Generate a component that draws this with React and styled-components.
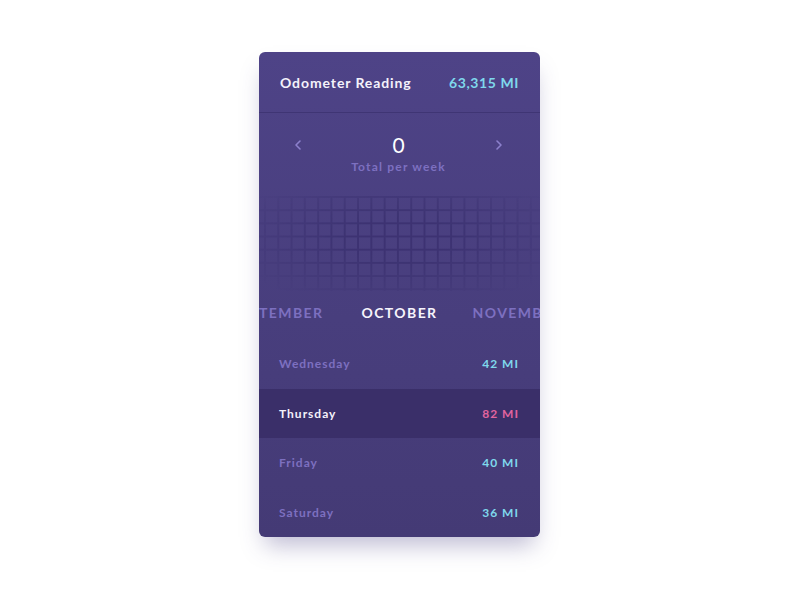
import React from "react";
import styled, { createGlobalStyle } from "styled-components";

const days = [
  { day: "Wednesday", miles: "42 MI" },
  { day: "Thursday", miles: "82 MI", active: true },
  { day: "Friday", miles: "40 MI" },
  { day: "Saturday", miles: "36 MI" },
];

const Global = createGlobalStyle`
  html, body {
    margin: 0;
    background: #ffffff;
  }
  body {
    font-family: "Lato", "Open Sans", sans-serif;
  }
`;

const Chevron = ({ flip }) => (
  <svg width="8" height="12" viewBox="0 0 8 12" fill="none">
    <path
      d={flip ? "M2 2l4 4-4 4" : "M6 2L2 6l4 4"}
      stroke="#8c80cc"
      strokeWidth="1.6"
      strokeLinecap="round"
      strokeLinejoin="round"
    />
  </svg>
);

export default function App() {
  return (
    <>
      <Global />
      <Page>
        <Card>
          <Header>
            <Title>Odometer Reading</Title>
            <Value>63,315 MI</Value>
          </Header>
          <Summary>
            <NavButton>
              <Chevron />
            </NavButton>
            <Total>
              <Count>0</Count>
              <Caption>Total per week</Caption>
            </Total>
            <NavButton>
              <Chevron flip />
            </NavButton>
          </Summary>
          <Heatmap />
          <Months>
            <Month side="left">TEMBER</Month>
            <Month current>OCTOBER</Month>
            <Month side="right">NOVEMB</Month>
          </Months>
          <List>
            {days.map((d) => (
              <Row key={d.day} active={d.active}>
                <Day active={d.active}>{d.day}</Day>
                <Miles active={d.active}>{d.miles}</Miles>
              </Row>
            ))}
          </List>
        </Card>
      </Page>
    </>
  );
}

const Page = styled.div`
  width: 800px;
  height: 600px;
  display: flex;
  justify-content: center;
  padding-top: 52px;
  box-sizing: border-box;
`;

const Card = styled.div`
  width: 281px;
  height: 485px;
  margin-left: -1px;
  border-radius: 6px;
  overflow: hidden;
  background: linear-gradient(180deg, #4e4387 0%, #483e7d 55%, #443a75 100%);
  box-shadow: 0 14px 22px -6px rgba(70, 60, 130, 0.35);
  display: flex;
  flex-direction: column;
`;

const Header = styled.div`
  height: 61px;
  display: flex;
  align-items: center;
  justify-content: space-between;
  padding: 0 21px;
  border-bottom: 1px solid #3f3574;
`;

const Title = styled.span`
  color: #f4f2fb;
  font-size: 14px;
  font-weight: 700;
  letter-spacing: 0.9px;
`;

const Value = styled.span`
  color: #7fd8ec;
  font-size: 14px;
  font-weight: 700;
  letter-spacing: 0.6px;
`;

const Summary = styled.div`
  display: flex;
  align-items: flex-start;
  justify-content: space-between;
  padding: 21px 37px 0 35px;
  height: 59px;
`;

const NavButton = styled.div`
  padding-top: 5px;
  display: flex;
`;

const Total = styled.div`
  display: flex;
  flex-direction: column;
  align-items: center;
  gap: 3px;
`;

const Count = styled.span`
  color: #ffffff;
  font-size: 21px;
  font-weight: 400;
  line-height: 22px;
`;

const Caption = styled.span`
  color: #7d70c0;
  font-size: 12px;
  font-weight: 700;
  letter-spacing: 1.2px;
`;

const Heatmap = styled.div`
  height: 96px;
  margin: 3px 0 0;
  background-image: linear-gradient(90deg, #3b3170 1.5px, transparent 1.5px),
    linear-gradient(180deg, #3b3170 1.5px, transparent 1.5px);
  background-size: 13.3px 13.2px;
  background-position: 5px 0;
  -webkit-mask-image: radial-gradient(ellipse 62% 75% at 50% 45%, #000 30%, transparent 100%);
  mask-image: radial-gradient(ellipse 62% 75% at 50% 45%, #000 30%, transparent 100%);
  opacity: 0.85;
`;

const Months = styled.div`
  height: 45px;
  position: relative;
  display: flex;
  align-items: center;
  justify-content: center;
`;

const Month = styled.span`
  font-size: 14px;
  font-weight: 700;
  letter-spacing: 1.4px;
  color: ${(p) => (p.current ? "#f6f4fc" : "#7d70c0")};
  ${(p) => p.side === "left" && "position: absolute; left: 0;"}
  ${(p) => p.side === "right" && "position: absolute; right: -3px;"}
`;

const List = styled.div`
  display: flex;
  flex-direction: column;
  margin-top: 4px;
`;

const Row = styled.div`
  height: 49.5px;
  display: flex;
  align-items: center;
  justify-content: space-between;
  padding: 0 21px 0 20px;
  background: ${(p) => (p.active ? "#3a2f69" : "transparent")};
`;

const Day = styled.span`
  font-size: 12px;
  font-weight: 700;
  letter-spacing: 1px;
  color: ${(p) => (p.active ? "#f4f2fb" : "#7d70c0")};
`;

const Miles = styled.span`
  font-size: 12px;
  font-weight: 700;
  letter-spacing: 1px;
  color: ${(p) => (p.active ? "#e0649f" : "#7fd8ec")};
`;
